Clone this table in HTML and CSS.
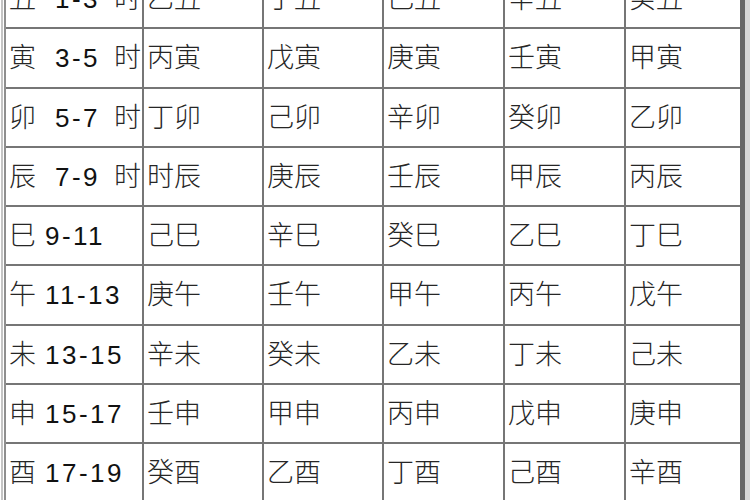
FILE: index.html
```html
<!DOCTYPE html>
<html lang="zh">
<head>
<meta charset="utf-8">
<title>时辰天干地支表</title>
<link rel="stylesheet" href="styles.css">
</head>
<body>
<div class="sheet">
  <div class="grid">
    <div class="cell">丑 <span class="num wide">1-3</span> 时</div>
    <div class="cell">乙丑</div><div class="cell">丁丑</div><div class="cell">己丑</div><div class="cell">辛丑</div><div class="cell">癸丑</div>

    <div class="cell">寅 <span class="num wide">3-5</span> 时</div>
    <div class="cell">丙寅</div><div class="cell">戊寅</div><div class="cell">庚寅</div><div class="cell">壬寅</div><div class="cell">甲寅</div>

    <div class="cell">卯 <span class="num wide">5-7</span> 时</div>
    <div class="cell">丁卯</div><div class="cell">己卯</div><div class="cell">辛卯</div><div class="cell">癸卯</div><div class="cell">乙卯</div>

    <div class="cell">辰 <span class="num wide">7-9</span> 时</div>
    <div class="cell">时辰</div><div class="cell">庚辰</div><div class="cell">壬辰</div><div class="cell">甲辰</div><div class="cell">丙辰</div>

    <div class="cell">巳 <span class="num">9-11</span></div>
    <div class="cell">己巳</div><div class="cell">辛巳</div><div class="cell">癸巳</div><div class="cell">乙巳</div><div class="cell">丁巳</div>

    <div class="cell">午 <span class="num">11-13</span></div>
    <div class="cell">庚午</div><div class="cell">壬午</div><div class="cell">甲午</div><div class="cell">丙午</div><div class="cell">戊午</div>

    <div class="cell">未 <span class="num">13-15</span></div>
    <div class="cell">辛未</div><div class="cell">癸未</div><div class="cell">乙未</div><div class="cell">丁未</div><div class="cell">己未</div>

    <div class="cell">申 <span class="num">15-17</span></div>
    <div class="cell">壬申</div><div class="cell">甲申</div><div class="cell">丙申</div><div class="cell">戊申</div><div class="cell">庚申</div>

    <div class="cell">酉 <span class="num">17-19</span></div>
    <div class="cell">癸酉</div><div class="cell">乙酉</div><div class="cell">丁酉</div><div class="cell">己酉</div><div class="cell">辛酉</div>
  </div>
</div>
</body>
</html>
```
FILE: styles.css
```css
html, body {
  margin: 0;
  padding: 0;
  background: #ffffff;
  overflow: hidden;
}

body {
  width: 750px;
  height: 500px;
}

.sheet {
  width: max-content;
  margin: -30px 0 0 1px;
  padding-left: 1px;
  border-left: 2px solid #c4c4c4;
  border-right: 5px solid #d6d6d6;
  background: #ffffff;
}

.grid {
  display: grid;
  grid-template-columns: 136px 118px 118px 119px 119px 114px;
  grid-auto-rows: 57.3px;
  gap: 2px;
  background: #767676;
  border-left: 2px solid #8e8e8e;
  border-right: 5px solid #666666;
}

.cell {
  background: #ffffff;
  padding: 0 0 0 3px;
  line-height: 53px;
  white-space: pre;
  font-family: "Noto Sans CJK SC", "Liberation Sans", sans-serif;
  font-size: 27px;
  font-weight: 300;
  color: #262626;
  overflow: hidden;
}

.num {
  margin-left: 3px;
  font-family: "Liberation Sans", sans-serif;
  font-size: 26px;
  font-weight: 400;
  letter-spacing: 2.5px;
  color: #111111;
}

.num.wide {
  margin: 0 8px 0 13px;
}
```
